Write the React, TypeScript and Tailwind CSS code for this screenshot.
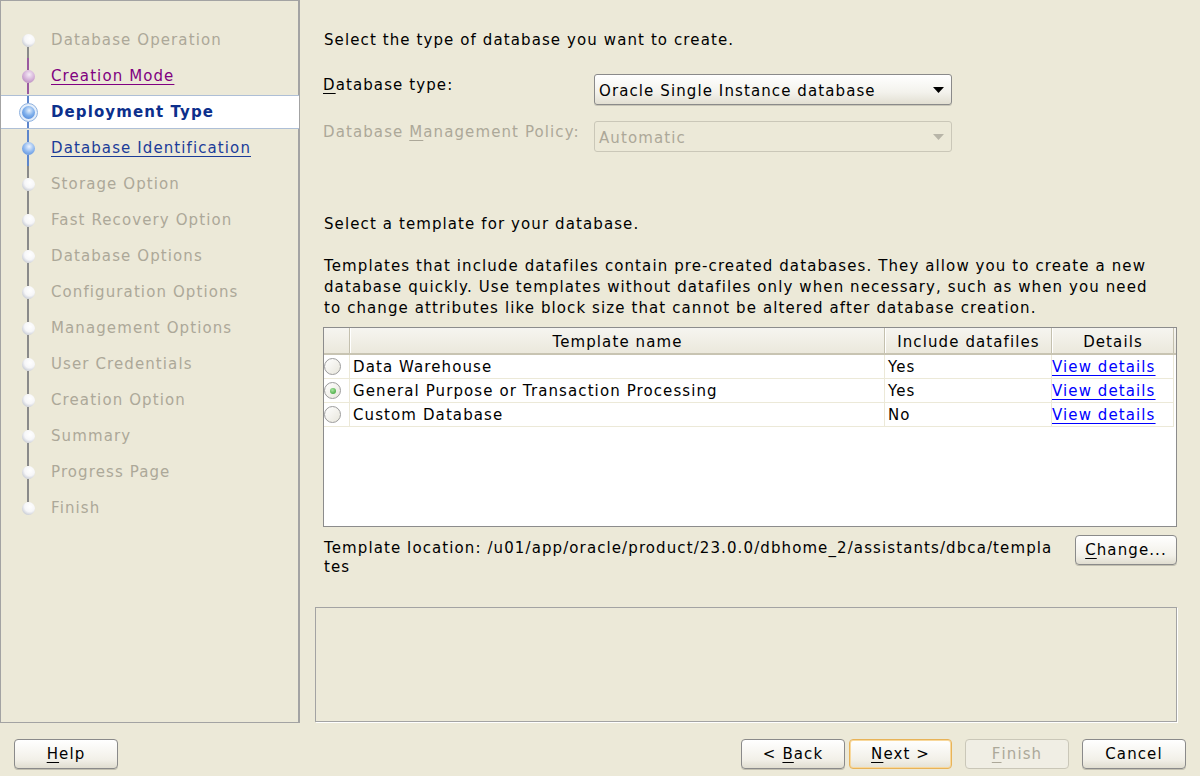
import React from "react";

const FONT = { fontFamily: '"DejaVu Sans", Verdana, sans-serif' };

type StepState = "disabled" | "visited" | "current" | "next";
const steps: { label: string; state: StepState; top: string | null; bottom: string | null }[] = [
  { label: "Database Operation", state: "disabled", top: null, bottom: "#8a8a8a" },
  { label: "Creation Mode", state: "visited", top: "#9a5aa0", bottom: "#9a5aa0" },
  { label: "Deployment Type", state: "current", top: "#5d86cc", bottom: "#5d86cc" },
  { label: "Database Identification", state: "next", top: "#5d86cc", bottom: "#5d86cc" },
  { label: "Storage Option", state: "disabled", top: "#8a8a8a", bottom: "#8a8a8a" },
  { label: "Fast Recovery Option", state: "disabled", top: "#8a8a8a", bottom: "#8a8a8a" },
  { label: "Database Options", state: "disabled", top: "#8a8a8a", bottom: "#8a8a8a" },
  { label: "Configuration Options", state: "disabled", top: "#8a8a8a", bottom: "#8a8a8a" },
  { label: "Management Options", state: "disabled", top: "#8a8a8a", bottom: "#8a8a8a" },
  { label: "User Credentials", state: "disabled", top: "#8a8a8a", bottom: "#8a8a8a" },
  { label: "Creation Option", state: "disabled", top: "#8a8a8a", bottom: "#8a8a8a" },
  { label: "Summary", state: "disabled", top: "#8a8a8a", bottom: "#8a8a8a" },
  { label: "Progress Page", state: "disabled", top: "#8a8a8a", bottom: "#8a8a8a" },
  { label: "Finish", state: "disabled", top: "#8a8a8a", bottom: null },
];

function Dot({ state }: { state: StepState }) {
  if (state === "current") {
    return (
      <div className="w-[19px] h-[19px] rounded-full border border-[#8fb2e0] bg-[#e4eefa] flex items-center justify-center shrink-0">
        <div className="w-[13px] h-[13px] rounded-full bg-[radial-gradient(circle_at_55%_35%,#e6f0fc_0%,#7fb0ec_45%,#3f78d0_100%)]" />
      </div>
    );
  }
  if (state === "visited") {
    return <div className="w-[13px] h-[13px] rounded-full shrink-0 bg-[radial-gradient(circle_at_55%_35%,#f6ecf6_0%,#d4b0d8_50%,#a877b0_100%)]" />;
  }
  if (state === "next") {
    return <div className="w-[13px] h-[13px] rounded-full shrink-0 bg-[radial-gradient(circle_at_55%_35%,#eef5ff_0%,#8cb6ee_50%,#4a80d4_100%)]" />;
  }
  return (
    <div className="w-[13px] h-[13px] rounded-full shrink-0 bg-[radial-gradient(circle_at_60%_35%,#ffffff_0%,#f6f6f8_45%,#c4c8d2_80%,#9ea2b0_100%)]" />
  );
}

function StepRow({ s }: { s: (typeof steps)[number] }) {
  const labelCls =
    s.state === "disabled"
      ? "text-[#aca899]"
      : s.state === "visited"
      ? "text-[#800080] underline underline-offset-[3px]"
      : s.state === "current"
      ? "text-[#0c2f8c] font-bold"
      : "text-[#1b3c98] underline underline-offset-[3px]";
  const inner = (
    <div className="flex h-full items-stretch">
      <div className="w-[50px] pl-[4px] flex flex-col items-center">
        <div className="flex-1 w-[2px]" style={{ background: s.top ?? "transparent" }} />
        <Dot state={s.state} />
        <div className="flex-1 w-[2px]" style={{ background: s.bottom ?? "transparent" }} />
      </div>
      <div className={`flex items-center whitespace-nowrap ${labelCls}`}>{s.label}</div>
    </div>
  );
  if (s.state === "current") {
    return (
      <div className="h-[36px] py-[1px]">
        <div className="h-[34px] bg-white border-y border-[#aebfd6] mr-[-1px]">{inner}</div>
      </div>
    );
  }
  return <div className="h-[36px]">{inner}</div>;
}

function Combo({ text, disabled }: { text: string; disabled?: boolean }) {
  return (
    <div
      className={`w-[358px] h-[31px] rounded-[3px] border flex items-center justify-between pl-[4px] pr-[7px] ${
        disabled
          ? "border-[#cac7b8] text-[#aca899] bg-[#ece9d8]"
          : "border-[#8a8a8a] text-black bg-[linear-gradient(#ffffff,#f3f2ec_60%,#e2dfd2)] shadow-[0_1px_0_#c9c6b8]"
      }`}
    >
      <span className="whitespace-nowrap mt-[3px]">{text}</span>
      <svg width="11" height="6" viewBox="0 0 11 6">
        <path d="M0 0 H11 L5.5 6 Z" fill={disabled ? "#b8b5a8" : "#000"} />
      </svg>
    </div>
  );
}

function Radio({ checked }: { checked?: boolean }) {
  return (
    <div className="w-[17px] h-[17px] rounded-full border border-[#9c9c9c] bg-[linear-gradient(135deg,#ffffff,#e8e6dc)] flex items-center justify-center">
      {checked && <div className="w-[6px] h-[6px] rounded-full bg-[radial-gradient(circle_at_40%_35%,#a8e6a0,#2f9a2a)]" />}
    </div>
  );
}

function Btn({
  children,
  w,
  disabled,
  focused,
}: {
  children: React.ReactNode;
  w: string;
  disabled?: boolean;
  focused?: boolean;
}) {
  return (
    <div
      className={`${w} h-[30px] rounded-[4px] border flex items-center justify-center whitespace-nowrap ${
        disabled
          ? "border-[#cac7b8] text-[#aca899] bg-[#f0eee4]"
          : focused
          ? "border-[#e8b358] text-black bg-[linear-gradient(#ffffff,#f2f0e8_70%,#e4e1d4)] shadow-[inset_0_0_0_1px_#f8d89c]"
          : "border-[#8a8a8a] text-black bg-[linear-gradient(#ffffff,#f2f0e8_70%,#e0ddd0)] shadow-[0_1px_0_#c2bfb0]"
      }`}
    >
      {children}
    </div>
  );
}

const rows = [
  { name: "Data Warehouse", inc: "Yes", checked: false },
  { name: "General Purpose or Transaction Processing", inc: "Yes", checked: true },
  { name: "Custom Database", inc: "No", checked: false },
];

export default function App() {
  return (
    <div
      className="w-[1200px] h-[776px] bg-[#ece9d8] flex flex-col text-[15px] tracking-[1.1px] leading-[21px] text-black overflow-hidden"
      style={FONT}
    >
      <div className="flex h-[723px]">
        {/* Left steps panel */}
        <div className="w-[300px] h-[723px] border border-r-2 border-[#a3a3a3] pt-[21px] shrink-0">
          {steps.map((s) => (
            <StepRow key={s.label} s={s} />
          ))}
        </div>

        {/* Right content */}
        <div className="flex-1 flex flex-col pl-[15px] pr-[23px]">
          <div className="pl-[8px] flex flex-col">
            <div className="mt-[30px] pl-[1px] whitespace-nowrap">Select the type of database you want to create.</div>

            <div className="mt-[23px] flex items-start">
              <div className="w-[271px] pt-[1px] whitespace-nowrap">
                <span className="underline underline-offset-[3px]">D</span>atabase type:
              </div>
              <Combo text="Oracle Single Instance database" />
            </div>
            <div className="mt-[16px] flex items-start">
              <div className="w-[271px] pt-[1px] whitespace-nowrap text-[#aca899]">
                Database <span className="underline underline-offset-[3px]">M</span>anagement Policy:
              </div>
              <Combo text="Automatic" disabled />
            </div>

            <div className="mt-[62px] pl-[1px] whitespace-nowrap">Select a template for your database.</div>

            <div className="mt-[21px] pl-[1px] whitespace-nowrap">
              <div>Templates that include datafiles contain pre-created databases. They allow you to create a new</div>
              <div>database quickly. Use templates without datafiles only when necessary, such as when you need</div>
              <div>to change attributes like block size that cannot be altered after database creation.</div>
            </div>

            {/* Table */}
            <div className="mt-[8px] w-[854px] h-[200px] border border-[#8c8c8c] bg-white">
              <div className="flex h-[27px] bg-[linear-gradient(#f6f5f0,#ebe8dc)] border-b-2 border-[#c8c4b2]">
                <div className="w-[26px] border-r border-[#c4c0ae]" />
                <div className="w-[535px] border-r border-[#c4c0ae] border-l border-l-white flex items-center justify-center pt-[3px]">
                  Template name
                </div>
                <div className="w-[167px] border-r border-[#c4c0ae] border-l border-l-white flex items-center justify-center pt-[3px]">
                  Include datafiles
                </div>
                <div className="w-[122px] border-r border-[#c4c0ae] border-l border-l-white flex items-center justify-center pt-[3px]">
                  Details
                </div>
              </div>
              {rows.map((r) => (
                <div key={r.name} className="flex h-[24px]">
                  <div className="w-[26px] border-r border-b border-[#ece9d8] flex items-center pl-[0px]">
                    <Radio checked={r.checked} />
                  </div>
                  <div className="w-[535px] border-r border-b border-[#ece9d8] flex items-center pl-[3px] pt-[1px] whitespace-nowrap">
                    {r.name}
                  </div>
                  <div className="w-[167px] border-r border-b border-[#ece9d8] flex items-center pl-[3px] pt-[1px]">{r.inc}</div>
                  <div className="w-[122px] border-r border-b border-[#ece9d8] flex items-center pl-[0px] pt-[1px]">
                    <span className="text-[#0000ff] underline underline-offset-[3px] whitespace-nowrap">View details</span>
                  </div>
                </div>
              ))}
            </div>

            <div className="mt-[8px] flex items-start justify-between w-[854px]">
              <div className="pl-[1px] pt-[4px] leading-[19px] whitespace-nowrap">
                <div>Template location: /u01/app/oracle/product/23.0.0/dbhome_2/assistants/dbca/templa</div>
                <div>tes</div>
              </div>
              <Btn w="w-[102px]">
                <span className="underline underline-offset-[3px]">C</span>hange...
              </Btn>
            </div>
          </div>

          <div className="mt-auto mb-[1px] h-[115px] border border-[#a3a3a3] shadow-[1px_1px_0_#ffffff]" />
        </div>
      </div>

      {/* Footer */}
      <div className="flex-1 flex items-start pt-[16px] pl-[14px] pr-[14px]">
        <Btn w="w-[104px]">
          <span className="underline underline-offset-[3px]">H</span>elp
        </Btn>
        <div className="ml-auto flex">
          <Btn w="w-[104px]">
            &lt; <span className="underline underline-offset-[3px] ml-[6px]">B</span>ack
          </Btn>
          <div className="ml-[4px]">
            <Btn w="w-[103px]" focused>
              <span className="underline underline-offset-[3px]">N</span>ext &gt;
            </Btn>
          </div>
          <div className="ml-[13px]">
            <Btn w="w-[104px]" disabled>
              <span className="underline underline-offset-[3px]">F</span>inish
            </Btn>
          </div>
          <div className="ml-[13px]">
            <Btn w="w-[104px]">Cancel</Btn>
          </div>
        </div>
      </div>
    </div>
  );
}
